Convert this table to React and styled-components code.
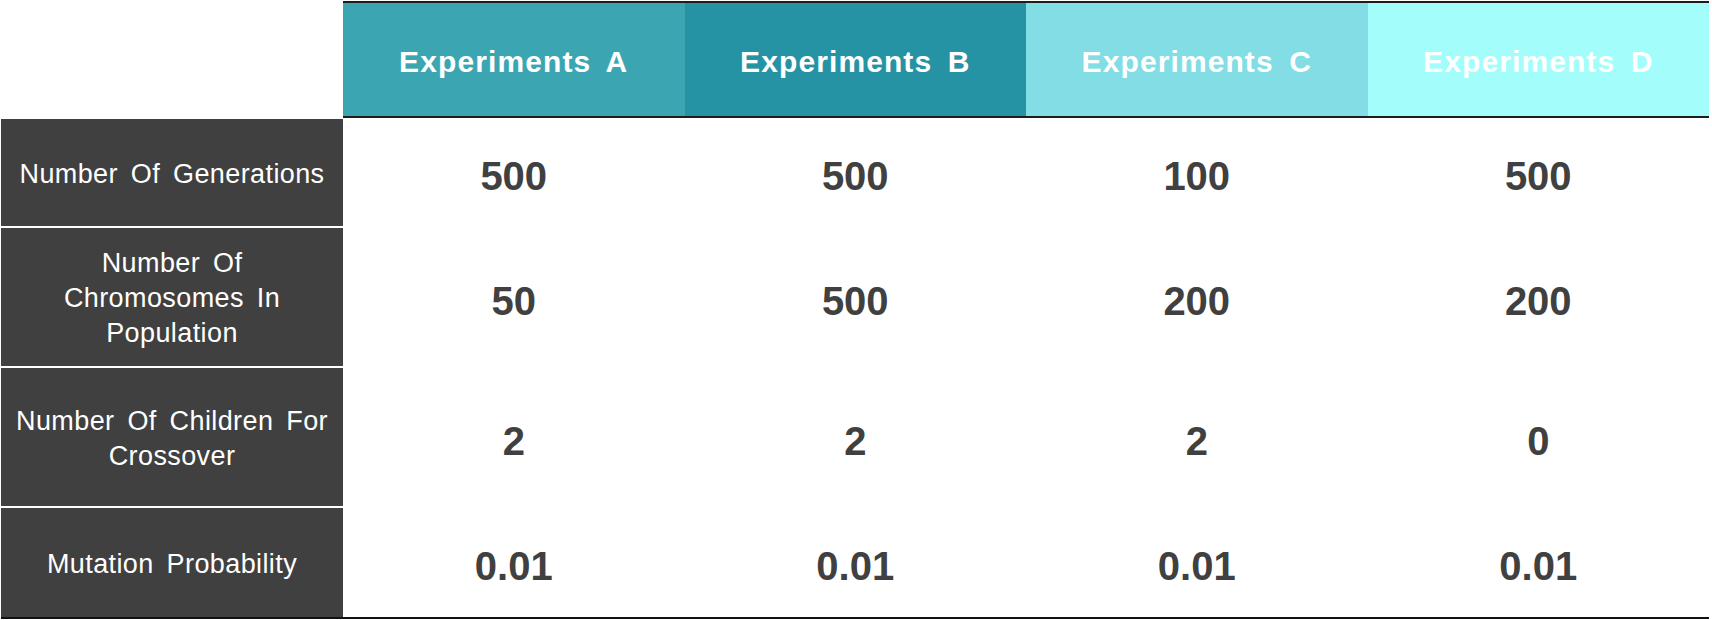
import React from 'react'
import styled, { createGlobalStyle } from 'styled-components'

const GlobalStyle = createGlobalStyle`
  html, body {
    margin: 0;
    padding: 0;
    background: #ffffff;
  }
  body {
    font-family: "Liberation Sans", Arial, sans-serif;
  }
`

const experiments = [
  { name: 'Experiments A', color: '#3ba6b1' },
  { name: 'Experiments B', color: '#2593a4' },
  { name: 'Experiments C', color: '#83dde5' },
  { name: 'Experiments D', color: '#a3fefb' },
]

const rows = [
  { label: ['Number Of Generations'], values: ['500', '500', '100', '500'], height: 107 },
  { label: ['Number Of', 'Chromosomes In', 'Population'], values: ['50', '500', '200', '200'], height: 138 },
  { label: ['Number Of Children For', 'Crossover'], values: ['2', '2', '2', '0'], height: 138 },
  { label: ['Mutation Probability'], values: ['0.01', '0.01', '0.01', '0.01'], height: 109 },
]

const Page = styled.div`
  width: 1708px;
  padding: 1px 0 0 1px;
`

const HeaderRow = styled.div`
  display: grid;
  grid-template-columns: 342px 1fr;
`

const Corner = styled.div`
  background: #ffffff;
`

const HeaderBand = styled.div`
  display: grid;
  grid-template-columns: repeat(4, 1fr);
  height: 113px;
  border-top: 2px solid #1d1d1d;
  border-bottom: 2px solid #1d1d1d;
`

const HeaderCell = styled.div`
  display: flex;
  align-items: center;
  justify-content: center;
  background: ${p => p.bg};
  color: #ffffff;
  font-weight: 700;
  font-size: 30px;
  letter-spacing: 1.1px;
  word-spacing: 6px;
  padding-top: 5px;
`

const Body = styled.div`
  display: flex;
  flex-direction: column;
  gap: 2px;
  margin-top: 1px;
  border-bottom: 2px solid #111111;
`

const Row = styled.div`
  display: grid;
  grid-template-columns: 342px repeat(4, 1fr);
  height: ${p => p.h}px;
`

const Label = styled.div`
  display: flex;
  flex-direction: column;
  align-items: center;
  justify-content: center;
  background: #404040;
  color: #ffffff;
  font-size: 27px;
  line-height: 35px;
  letter-spacing: 0.4px;
  word-spacing: 5px;
  text-align: center;
  padding-top: 3px;
`

const Value = styled.div`
  display: flex;
  align-items: center;
  justify-content: center;
  color: #404040;
  font-weight: 700;
  font-size: 40px;
  padding-top: 8px;
`

const App = () => {
  return (
    <>
      <GlobalStyle />
      <Page>
        <HeaderRow>
          <Corner />
          <HeaderBand>
            {experiments.map(e => (
              <HeaderCell key={e.name} bg={e.color}>{e.name}</HeaderCell>
            ))}
          </HeaderBand>
        </HeaderRow>
        <Body>
          {rows.map((r, i) => (
            <Row key={i} h={r.height}>
              <Label>
                {r.label.map(line => <span key={line}>{line}</span>)}
              </Label>
              {r.values.map((v, j) => (
                <Value key={j}>{v}</Value>
              ))}
            </Row>
          ))}
        </Body>
      </Page>
    </>
  )
}

export default App
